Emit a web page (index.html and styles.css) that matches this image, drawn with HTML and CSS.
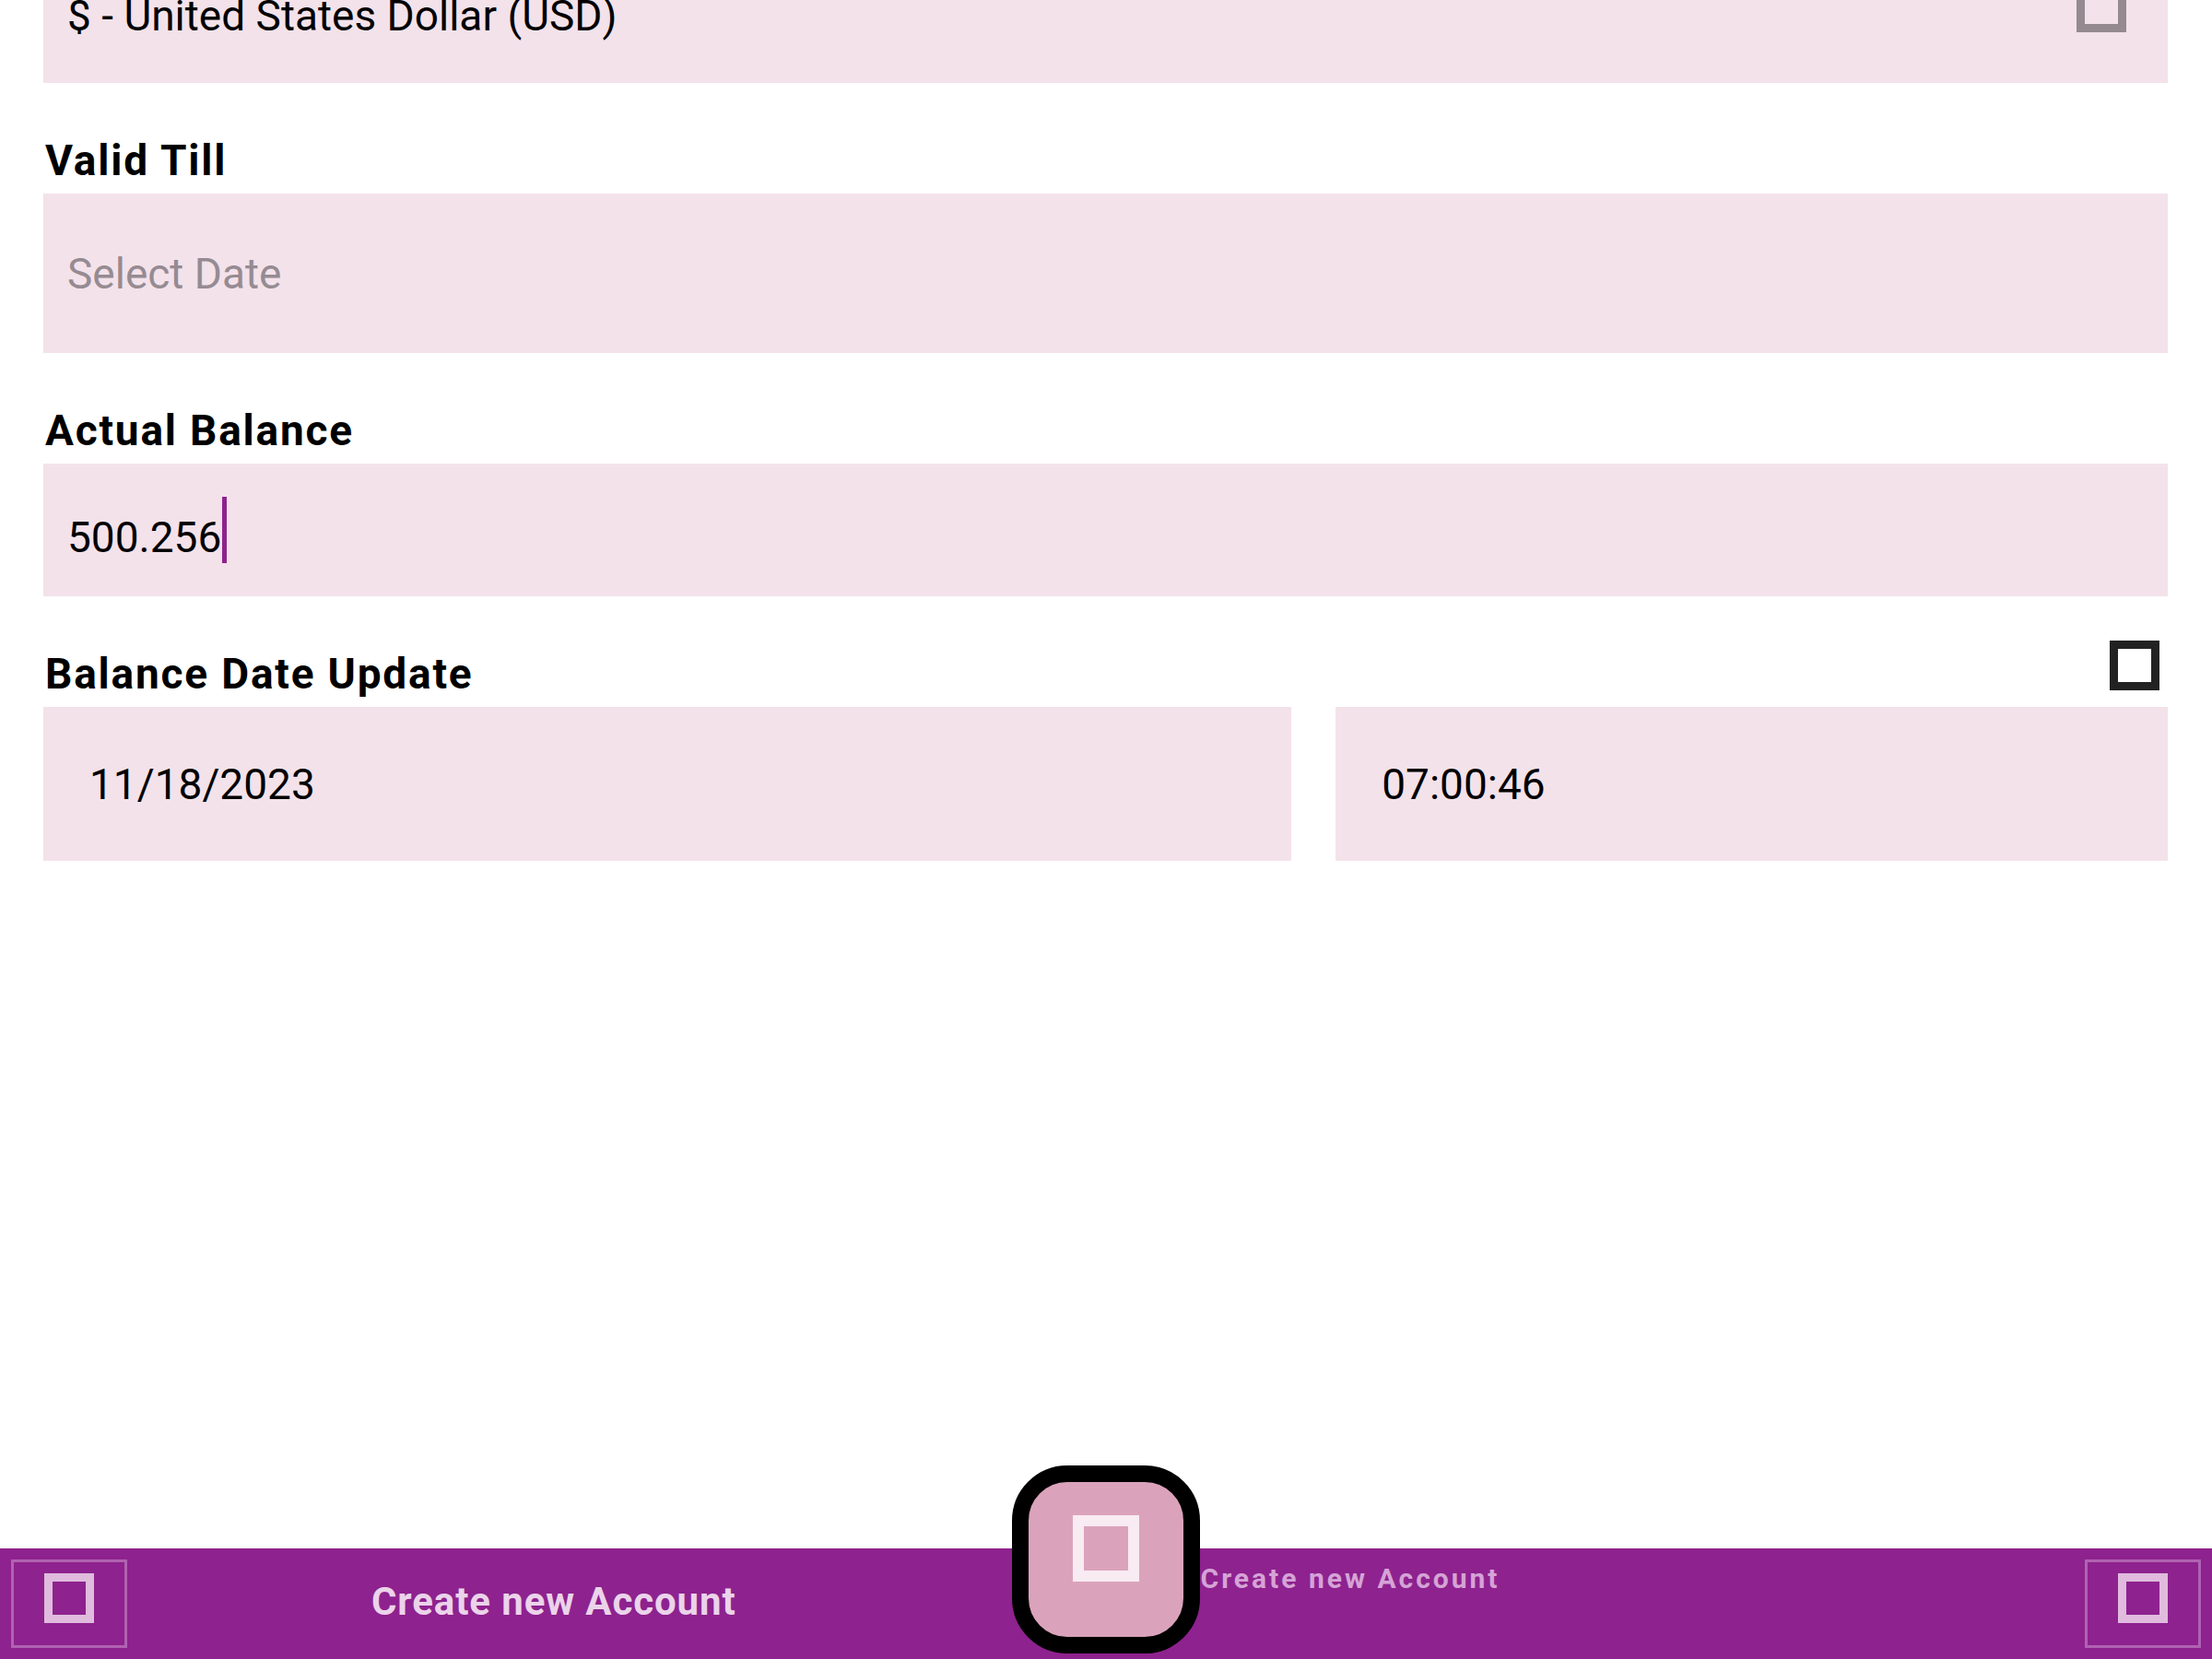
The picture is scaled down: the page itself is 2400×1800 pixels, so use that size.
FILE: index.html
```html
<!DOCTYPE html>
<html lang="en">
<head>
<meta charset="utf-8">
<title>Create new Account</title>
<link rel="stylesheet" href="styles.css">
</head>
<body>
<div class="screen">
  <main class="form">
    <div class="field field-select">
      <span class="value">$ - United States Dollar (USD)</span>
      <span class="tofu tofu-muted"></span>
    </div>

    <section class="group">
      <div class="label-row"><span class="label">Valid Till</span></div>
      <div class="field field-date"><span class="placeholder">Select Date</span></div>
    </section>

    <section class="group">
      <div class="label-row"><span class="label">Actual Balance</span></div>
      <div class="field field-amount"><span class="value value-amount">500.256</span><span class="caret"></span></div>
    </section>

    <section class="group">
      <div class="label-row">
        <span class="label">Balance Date Update</span>
        <span class="tofu tofu-dark"></span>
      </div>
      <div class="split">
        <div class="field field-dt"><span class="value">11/18/2023</span></div>
        <div class="field field-dt"><span class="value">07:00:46</span></div>
      </div>
    </section>
  </main>

  <nav class="bar">
    <div class="dest dest-left"><span class="tofu tofu-light"></span></div>
    <div class="bar-label bar-label-left"><span class="bar-text-left">Create new Account</span></div>
    <div class="fab"><span class="tofu tofu-fab"></span></div>
    <div class="bar-label bar-label-right">Create new Account</div>
    <div class="dest dest-right"><span class="tofu tofu-light"></span></div>
  </nav>
</div>
</body>
</html>
```

FILE: styles.css
```css
html, body {
  margin: 0;
  padding: 0;
  background: #ffffff;
}

body {
  font-family: Roboto, "Noto Sans", "Liberation Sans", sans-serif;
  color: #000;
}

.screen {
  width: 2400px;
  height: 1800px;
  display: flex;
  flex-direction: column;
  overflow: hidden;
}

/* ---------- form ---------- */
.form {
  flex: 1;
  padding: 0 48px 0 47px;
  margin-top: -60px;
}

.field {
  box-sizing: border-box;
  background: #f3e2ea;
  display: flex;
  align-items: center;
  font-size: 46px;
  color: #000;
  white-space: nowrap;
}

.field-select {
  height: 150px;
  padding: 4px 45px 0 26px;
  justify-content: space-between;
}

.field-select .tofu-muted {
  align-self: flex-start;
  margin-top: 37px;
}

.group {
  margin-top: 57px;
}

.label-row {
  display: flex;
  justify-content: space-between;
  align-items: flex-start;
  margin-bottom: 9px;
}

.label {
  font-size: 46px;
  font-weight: 700;
  line-height: 54px;
  letter-spacing: 1.8px;
  padding-left: 2px;
  white-space: nowrap;
}

.field-date {
  height: 173px;
  padding-left: 26px;
}

.placeholder {
  color: #968b92;
}

.field-amount {
  height: 144px;
  padding-left: 26px;
}

.value-amount {
  padding-top: 16px;
}

.caret {
  display: inline-block;
  width: 5px;
  height: 72px;
  background: #8e228e;
  margin-left: 1px;
}

.split {
  display: grid;
  grid-template-columns: 3fr 2fr;
  gap: 48px;
}

.field-dt {
  height: 167px;
  padding-left: 50px;
}

/* ---------- tofu (missing icon glyph) boxes ---------- */
.tofu {
  display: block;
  box-sizing: border-box;
  width: 54px;
  height: 54px;
  flex-shrink: 0;
}

.tofu-muted {
  border: 9px solid #948a90;
}

.tofu-dark {
  border: 9px solid #222222;
  margin-top: -9px;
  margin-right: 9px;
}

.tofu-light {
  border: 9px solid #e0bbde;
}

.tofu-fab {
  width: 72px;
  height: 72px;
  border: 12px solid #f8ebf2;
}

/* ---------- bottom bar ---------- */
.bar {
  flex-shrink: 0;
  height: 120px;
  background: #8e228e;
  display: flex;
  align-items: flex-start;
}

.dest {
  box-sizing: border-box;
  width: 126px;
  height: 96px;
  margin-top: 12px;
  border: 3px solid #b062b2;
  display: flex;
  align-items: center;
  justify-content: center;
  padding-bottom: 12px;
  flex-shrink: 0;
}

.dest-left {
  margin-left: 12px;
}

.dest-right {
  margin-right: 12px;
}

.bar-label {
  flex: 1 1 0;
  min-width: 0;
  font-weight: 700;
  white-space: nowrap;
}

.bar-label-left {
  font-size: 42px;
  letter-spacing: 0.9px;
  color: #ebd3ea;
  text-align: center;
  margin-top: 33px;
}

.bar-text-left {
  margin-right: 34px;
}

.bar-label-right {
  font-size: 30px;
  letter-spacing: 3px;
  color: #d5a3d6;
  margin-top: 15px;
  padding-left: 1px;
}

.fab {
  box-sizing: border-box;
  width: 204px;
  height: 204px;
  margin-top: -90px;
  border: 18px solid #000;
  border-radius: 60px;
  background: #dba3bb;
  display: flex;
  justify-content: center;
  align-items: flex-start;
  padding-top: 36px;
  flex-shrink: 0;
}
```
